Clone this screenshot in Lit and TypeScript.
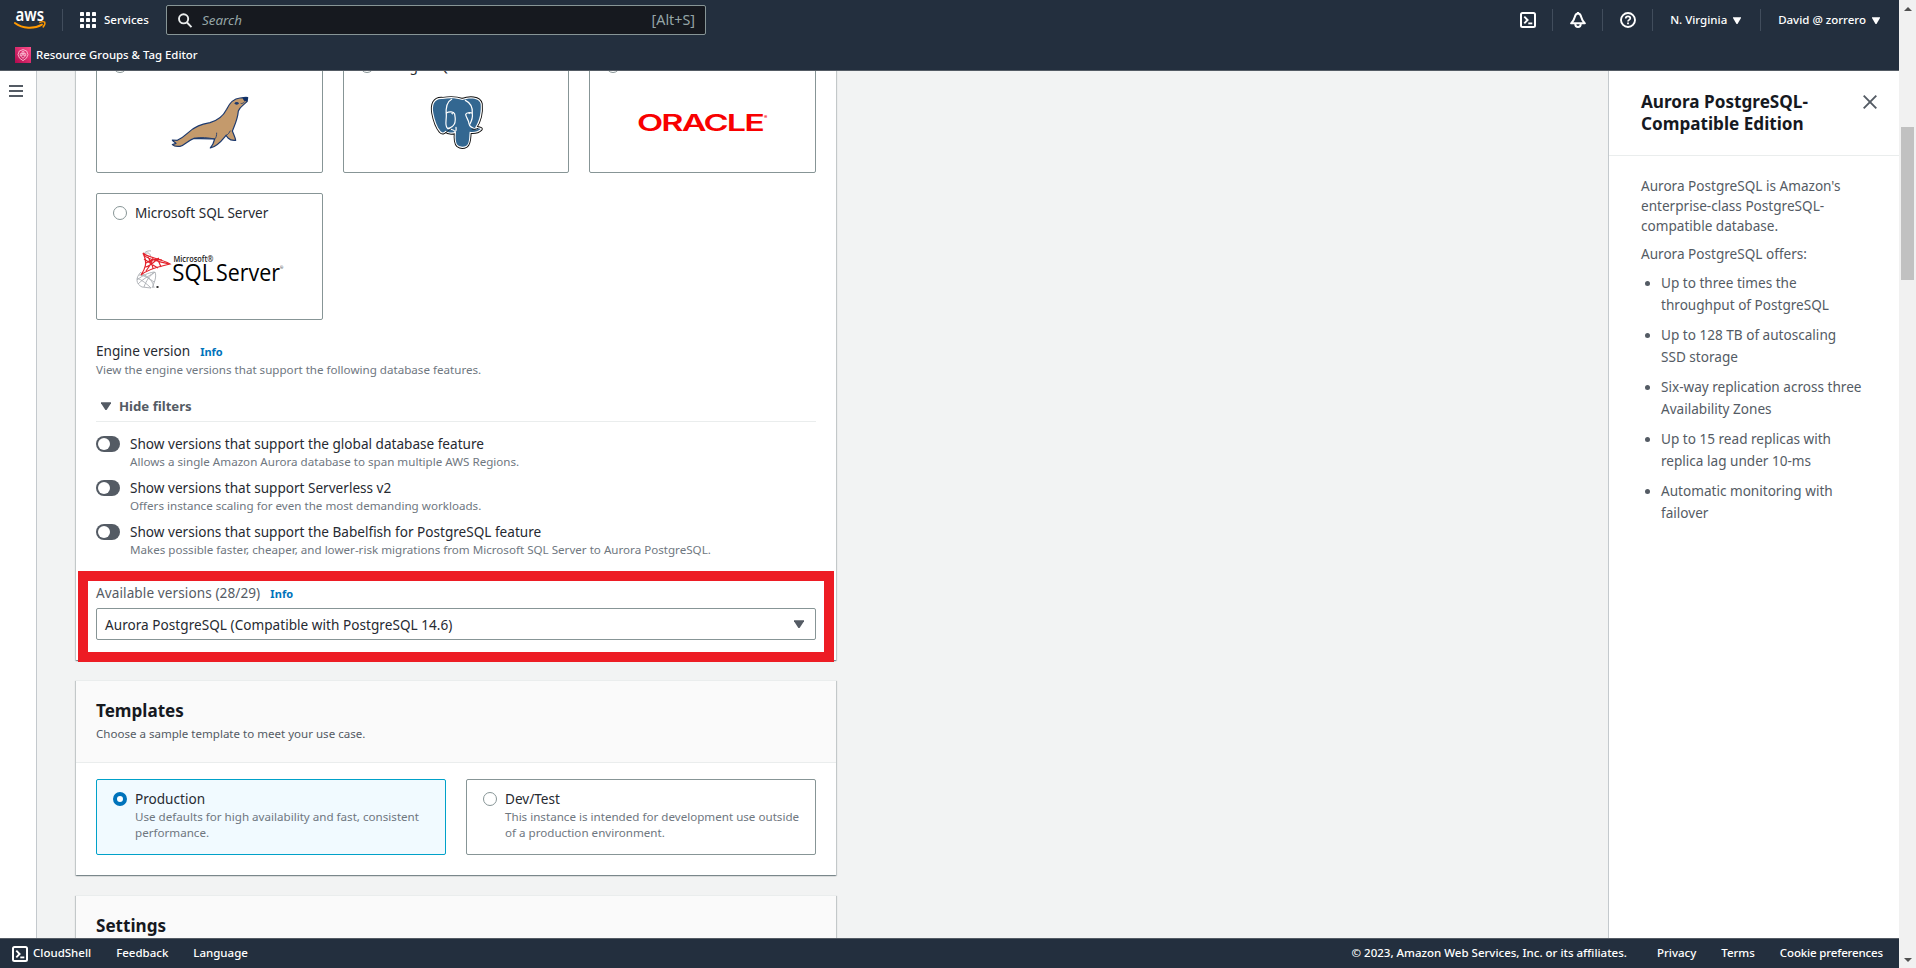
import { LitElement, html, css, svg, nothing } from "lit";
import { customElement, property } from "lit/decorators.js";
import { classMap } from "lit/directives/class-map.js";

const caret = (w: number, h: number) =>
  html`<svg width=${w} height=${h} viewBox="0 0 10 8" preserveAspectRatio="none"><path d="M0 .2h10v1L5.6 8H4.4L0 1.2z" fill="currentColor"/></svg>`;

const shellIcon = html`<svg width="16" height="16" viewBox="0 0 16 16" fill="none" stroke="#fff" stroke-width="2">
  <rect x="1" y="1" width="14" height="14" rx="1.5"/><path d="M4.3 4.6 7.6 8l-3.3 3.4" stroke-width="1.9"/><path d="M8.3 11.4h4" stroke-width="1.8"/></svg>`;

const bellIcon = html`<svg width="16" height="16" viewBox="0 0 16 16" fill="none" stroke="#fff" stroke-width="2" stroke-linejoin="round">
  <path d="M8 1.500C6 1.500 5.200 3.200 4.700 5.200 4.200 7.500 3.200 9 1.100 11.300h13.800C12.800 9 11.800 7.500 11.300 5.200 10.800 3.200 10 1.500 8 1.500z"/>
  <path d="M8 0v2"/><path d="M5.300 12c0 1.900 1 3 2.700 3s2.700-1.100 2.700-3"/></svg>`;

const helpIcon = html`<svg width="16" height="16" viewBox="0 0 16 16" fill="none" stroke="#fff" stroke-width="1.9">
  <circle cx="8" cy="8" r="7"/><path d="M5.700 6.500C5.700 5.100 6.700 4.300 8 4.300s2.300.8 2.300 2c0 1.500-2.300 1.700-2.300 3.200" stroke-width="1.7"/><path d="M8 10.500v1.700" stroke-width="1.8"/></svg>`;

const awsLogo = html`<svg width="32" height="22" viewBox="0 0 32 22">
  <text x="1.500" y="11.500" class="awstext" textLength="28.500" lengthAdjust="spacingAndGlyphs">aws</text>
  <path d="M.9 14C8.500 19.800 20 20.200 28 15.600" fill="none" stroke="#f90" stroke-width="1.900" stroke-linecap="round"/>
  <path d="M25.300 13.500c2-.9 4.600-.9 5.400-.4.500 1.200-.4 3.900-1.900 5.400" fill="none" stroke="#f90" stroke-width="1.400"/></svg>`;

const gridIcon = html`<svg width="16" height="16" viewBox="0 0 16 16" fill="#fff">
  ${[0, 6, 12].map((y) => [0, 6, 12].map((x) => svg`<rect x=${x} y=${y} width="4" height="4" rx=".4"/>`))}</svg>`;

const groupsIcon = html`<svg width="16" height="16" viewBox="0 0 16 16">
  <defs><linearGradient id="pink" x1="0" y1="1" x2="1" y2="0"><stop offset="0" stop-color="#b0084d"/><stop offset="1" stop-color="#ff4f8b"/></linearGradient></defs>
  <rect width="16" height="16" fill="url(#pink)"/>
  <g fill="none" stroke="#ffd3e2" stroke-width=".8"><path d="M8 2.600 4.300 4 3 7.700l1.600 3.500L8 13.600l3.400-2.400L13 7.700 11.700 4z"/><path d="M5.200 6.700h2v2h-2zM8.800 6.700h2v2h-2zM7 4.700h2v2H7zM6 9.200l2 2.200 2-2.200"/></g></svg>`;

const seaLion = html`<svg width="80" height="54" viewBox="300 90 240 162">
  <path d="M307 222l15 1c13-7 18-10 30-21 23-22 43-27 68-32 25-7 40-20 50-40 8-18 20-32 40-34 10 0 16-3 23-1l-2 12c-11 11-21 15-26 28-2 25-10 40-18 60 5 13 9 20 10 28-9 1-17-1-23-7l-6-8c-10 12-23 32-47 38 7-8 11-18 13-27-24-1-44-2-62-2-17 5-27 21-42 24-10 1-18 0-23-5l11-4c-4-4-10-6-11-10z" fill="#c49a6c" stroke="#1d3a6e" stroke-width="3.600" stroke-linejoin="round"/>
  <path d="M517 95l16-1-1 13-10-3z" fill="#0f2f66"/><ellipse cx="500" cy="112" rx="6" ry="4" fill="#1d3a6e"/>
  <path d="M512 112c4 2 8-1 12-5M434 219c5-4 6-11 6-19M468 208c6-2 10-8 13-14M372 217c20-5 42-2 62 2" fill="none" stroke="#1d3a6e" stroke-width="2.600"/></svg>`;

const elephantBody =
  "M128 100C101 97 95 118 99 142c4 22 11 42 22 55 5 5 10 4 14-2 8 6 20 7 32 3-2 20-1 35 6 41 8 6 18 5 25 1 10-7 8-25 10-42 12 2 25 0 33-8-6-3-12-2-17-4C238 166 243 138 241 115c-4-20-35-19-55-12-18-6-40-6-58-3z";
const elephant = html`<svg width="57" height="56" viewBox="83 88 171 168" fill="none" stroke-linejoin="round">
  <path d=${elephantBody} stroke="#111" stroke-width="12.500"/>
  <path d=${elephantBody} stroke="#fff" stroke-width="7"/>
  <path d=${elephantBody} fill="#336791"/>
  <g stroke="#fff" stroke-width="3.600" stroke-linecap="round"><path d="M154 101C138 109 136 130 138 150c0 15-5 30 3 37 8 5 18 3 23 10 3 0 4-4 3-12"/>
  <path d="M138 142c8-5 22-5 25 3 2 11 4 21-1 30-4 8-13 12-20 14M195 104c17 8 22 25 21 39M216 143c-7-4-19-2-20 4 2 10 9 16 10 27 1 8 10 14 23 16"/><path d="M216 145c2 12-3 22-7 30"/></g>
  <path d="M152 142l7 1-3 4zM203 142l7-1-3 5z" fill="#fff"/>
  <path d="M136 201c7-5 12-10 16-11M234 187c-6 5-14 4-20 3" stroke="#111" stroke-width="2.500"/></svg>`;

const oracle = html`<svg width="130" height="20" viewBox="0 0 130 20">
  <text x="-1" y="18.200" class="oracle" textLength="126" lengthAdjust="spacingAndGlyphs">ORACLE</text>
  <text x="126" y="6" class="oracle tiny">®</text></svg>`;

const sqlServer = html`<svg width="148" height="42" viewBox="0 0 148 42">
  <g fill="none" stroke="#a9adb2" stroke-width=".9"><path d="M7 6c2-4 6-4.500 8-4M8 5c4-2 6-1 6.500 2M5 23C-1 29 0 35 6 38l9 1M5 24c8 4 12 8 13 15M1 31c6-5 11-7 17-8M2 35c6-6 13-9 17-12M8 38c2-6 6-12 11-15M19 23c2 5-1 11-3 16M1 29c5 2 10 6 14 10M3 26c5 0 11 4 15 7"/></g>
  <g fill="none" stroke="#e3222b" stroke-width="1.200"><path d="M7 4c5 5 17 5 27 11-7 2-21 4-29 11 4-6 7-12 2-22z"/><path d="M8 6c4 5 14 6 25 9M10 14c7-5 12-4 16-3M9 18c5 0 12-8 14-9M8 10c5 3 10 7 14 9M12 8c3 5 5 9 5 12M17 9c-1 5-4 9-7 13M21 10c2 3 3 5 4 8"/></g>
  <path d="M20.500 38h2" stroke="#333" stroke-width="2"/>
  <text x="37.500" y="12.800" class="ms" textLength="40" lengthAdjust="spacingAndGlyphs">Microsoft®</text>
  <text x="36.300" y="32.400" class="sql" textLength="41" lengthAdjust="spacingAndGlyphs">SQL</text>
  <text x="80" y="32.400" class="sql" textLength="64" lengthAdjust="spacingAndGlyphs">Server</text>
  <text x="144" y="20" class="dot">®</text></svg>`;

const shared = css`
  * { box-sizing: border-box; }
  svg { display: block; flex: none; overflow: visible; }
`;

@customElement("console-header")
class ConsoleHeader extends LitElement {
  static styles = [shared, css`
    :host { display: flex; flex-direction: column; background: #232f3e; border-bottom: 1px solid #545b64; color: #fff; font-size: 11.5px; font-weight: 500; line-height: 20px; }
    .bar { display: flex; align-items: center; height: 40px; padding: 0 19px 0 14px; }
    .awstext { font: 600 17px "Noto Sans", sans-serif; fill: #fff; }
    .sep { width: 1px; height: 22px; background: #414d5c; flex: none; }
    .logo { width: 48px; }
    .services { display: flex; align-items: center; gap: 8px; padding-left: 17px; width: 103px; }
    .search { display: flex; align-items: center; width: 540px; height: 30px; border: 1px solid #879596; border-radius: 2px; background: #16191f; color: #95a5a6; font-size: 14.3px; font-weight: 400; padding: 0 10px 0 11px; }
    .placeholder { flex: 1; padding-left: 10px; font-style: italic; font-size: 13.4px; }
    .right { margin-left: auto; display: flex; align-items: center; }
    .icon { padding: 0 16px 0 17px; }
    .icon.first { padding-left: 0; }
    .menu { display: flex; align-items: center; gap: 6px; padding-left: 17px; white-space: nowrap; }
    .region { width: 107px; }
    .fav { display: flex; align-items: center; gap: 5px; height: 30px; padding-left: 15px; font-size: 11.4px; }
  `];
  render() {
    return html`
      <div class="bar">
        <div class="logo">${awsLogo}</div><div class="sep"></div>
        <div class="services">${gridIcon}<span>Services</span></div>
        <div class="search">
          <svg width="14" height="15" viewBox="0 0 14 15" fill="none" stroke="#eaeded" stroke-width="1.900"><circle cx="5.600" cy="5.800" r="4.600"/><path d="M9 9.500l4.500 4.700"/></svg>
          <span class="placeholder">Search</span><span>[Alt+S]</span>
        </div>
        <div class="right">
          <div class="icon first">${shellIcon}</div><div class="sep"></div>
          <div class="icon">${bellIcon}</div><div class="sep"></div>
          <div class="icon">${helpIcon}</div><div class="sep"></div>
          <div class="menu region"><span>N. Virginia</span>${caret(8, 7)}</div><div class="sep"></div>
          <div class="menu"><span>David @ zorrero</span>${caret(8, 7)}</div>
        </div>
      </div>
      <div class="fav">${groupsIcon}<span>Resource Groups &amp; Tag Editor</span></div>`;
  }
}

@customElement("console-footer")
class ConsoleFooter extends LitElement {
  static styles = [shared, css`
    :host { display: flex; align-items: center; background: #232f3e; border-top: 1px solid #545b64; color: #fff; font-size: 11.5px; font-weight: 500; padding: 0 16px 1px 12px; line-height: 16px; white-space: nowrap; }
    .shell { display: flex; align-items: center; gap: 5px; }
    .shell svg { margin-top: 1px; }
    .left, .right { display: flex; align-items: center; gap: 25px; }
    .right { margin-left: auto; }
    .copy { margin-right: 5px; }
    .cookie { letter-spacing: -.15px; }
  `];
  render() {
    return html`
      <div class="left"><span class="shell">${shellIcon}CloudShell</span><span>Feedback</span><span>Language</span></div>
      <div class="right"><span class="copy">© 2023, Amazon Web Services, Inc. or its affiliates.</span><span>Privacy</span><span>Terms</span><span class="cookie">Cookie preferences</span></div>`;
  }
}

@customElement("option-tile")
class OptionTile extends LitElement {
  @property() label = "";
  @property() description = "";
  @property({ attribute: false }) logo: unknown = null;
  @property({ type: Boolean, reflect: true }) selected = false;
  static styles = [shared, css`
    :host { display: block; border: 1px solid #879596; border-radius: 2px; background: #fff; padding: 9px 10px 0 16px; box-sizing: border-box; }
    :host([selected]) { border-color: #00a1c9; background: #f1faff; }
    .row { display: flex; align-items: center; gap: 8px; height: 20px; line-height: 20px; }
    .radio { width: 14px; height: 14px; border: 1px solid #879596; border-radius: 50%; background: #fff; }
    .radio.on { border: 4px solid #0073bb; }
    .desc { margin-left: 22px; font-size: 11.62px; line-height: 16px; color: #6f777f; }
    .logo { display: flex; align-items: center; justify-content: center; height: 60px; margin: 17px 5px 0 0; }
    .oracle { font: 600 22.500px Inter, sans-serif; fill: #f80000; letter-spacing: -1.200px; }
    .oracle.tiny { font-size: 5px; letter-spacing: 0; }
    .ms { font: 600 8.500px "Open Sans", sans-serif; fill: #222; }
    .sql { font: 500 23.500px "Open Sans", sans-serif; fill: #000; }
    .dot { font: 400 4px "Open Sans", sans-serif; fill: #222; }
  `];
  render() {
    return html`<div class="row"><span class=${classMap({ radio: true, on: this.selected })}></span><span>${this.label}</span></div>
      ${this.description ? html`<div class="desc">${this.description}</div>` : nothing}
      ${this.logo ? html`<div class="logo">${this.logo}</div>` : nothing}`;
  }
}

const filters = [
  ["Show versions that support the global database feature", "Allows a single Amazon Aurora database to span multiple AWS Regions."],
  ["Show versions that support Serverless v2", "Offers instance scaling for even the most demanding workloads."],
  ["Show versions that support the Babelfish for PostgreSQL feature", "Makes possible faster, cheaper, and lower-risk migrations from Microsoft SQL Server to Aurora PostgreSQL."],
];

@customElement("database-form")
class DatabaseForm extends LitElement {
  static styles = [shared, css`
    :host { display: flex; flex-direction: column; gap: 20px; padding: 0 39px; overflow: hidden; background: #f2f3f3; }
    .card { position: relative; flex: none; width: 760px; background: #fff; border-top: 1px solid #eaeded; box-shadow: 0 1px 1px 0 rgba(0,28,36,.3), 1px 1px 1px 0 rgba(0,28,36,.15), -1px 1px 1px 0 rgba(0,28,36,.15); }
    .engine { margin-top: -46px; padding: 20px; }
    .tiles { display: grid; grid-template-columns: repeat(3, 1fr); grid-auto-rows: 127px; gap: 20px; }
    .tiles.two { grid-template-columns: repeat(2, 1fr); grid-auto-rows: 76px; padding: 16px 20px 20px; }
    .label { display: flex; align-items: baseline; gap: 10px; height: 20px; line-height: 20px; margin-top: 21px; }
    .info { color: #0073bb; font-weight: 700; font-size: 11px; }
    .hint { font-size: 11.62px; line-height: 16px; color: #6f777f; }
    .first-hint { margin-top: 1px; }
    .hide { display: flex; align-items: center; gap: 8px; margin-top: 18px; padding: 0 0 5px 5px; line-height: 20px; border-bottom: 1px solid #eaeded; font-weight: 700; font-size: 13.2px; color: #545b64; }
    .filters { display: flex; flex-direction: column; gap: 8px; margin-top: 12px; }
    .filter { display: flex; gap: 10px; line-height: 20px; }
    .toggle { width: 24px; height: 16px; margin-top: 2px; border-radius: 8px; background: #545b64; padding: 2px; flex: none; }
    .knob { width: 12px; height: 12px; border-radius: 50%; background: #fff; }
    .available { margin-top: 25px; color: #545b64; letter-spacing: .09px; }
    .select { display: flex; align-items: center; justify-content: space-between; height: 32px; margin-top: 5px; border: 1px solid #879596; border-radius: 2px; padding: 0 11px 0 8px; letter-spacing: .03px; }
    .select svg { color: #545b64; }
    .mark { position: absolute; left: 2px; right: 2px; bottom: -2px; height: 91px; border: 10px solid #ed1c24; }
    .head { background: #fafafa; border-bottom: 1px solid #eaeded; padding: 19px 20px; height: 82px; }
    .title { font-size: 17.1px; font-weight: 700; line-height: 22px; color: #16191f; }
    .head .hint { margin-top: 4px; font-size: 11.55px; color: #545b64; }
  `];
  render() {
    return html`
      <section class="card engine">
        <div class="tiles">
          <option-tile label="MariaDB" .logo=${seaLion}></option-tile>
          <option-tile label="PostgreSQL" .logo=${elephant}></option-tile>
          <option-tile label="Oracle" .logo=${oracle}></option-tile>
          <option-tile label="Microsoft SQL Server" .logo=${sqlServer}></option-tile>
        </div>
        <div class="label"><span>Engine version</span><span class="info">Info</span></div>
        <div class="hint first-hint">View the engine versions that support the following database features.</div>
        <div class="hide">${caret(10, 8)}<span>Hide filters</span></div>
        <div class="filters">${filters.map(([name, hint]) => html`
          <div class="filter"><div class="toggle"><div class="knob"></div></div><div><div>${name}</div><div class="hint">${hint}</div></div></div>`)}
        </div>
        <div class="label available"><span>Available versions (28/29)</span><span class="info">Info</span></div>
        <div class="select"><span>Aurora PostgreSQL (Compatible with PostgreSQL 14.6)</span>${caret(10, 8)}</div>
        <div class="mark"></div>
      </section>
      <section class="card">
        <div class="head"><div class="title">Templates</div><div class="hint">Choose a sample template to meet your use case.</div></div>
        <div class="tiles two">
          <option-tile selected label="Production" description="Use defaults for high availability and fast, consistent performance."></option-tile>
          <option-tile label="Dev/Test" description="This instance is intended for development use outside of a production environment."></option-tile>
        </div>
      </section>
      <section class="card"><div class="head"><div class="title">Settings</div></div></section>`;
  }
}

@customElement("help-panel")
class HelpPanel extends LitElement {
  static styles = [shared, css`
    :host { display: block; background: #fff; border-left: 1px solid #c4c9cd; color: #545b64; }
    .head { display: flex; justify-content: space-between; height: 85px; padding: 20px 22px 0 32px; border-bottom: 1px solid #eaeded; }
    .title { font-size: 17.15px; font-weight: 700; line-height: 22px; color: #16191f; }
    .head svg { margin-top: 4px; }
    .body { padding: 20px 32px; }
    p { margin: 0 0 8px; line-height: 20px; white-space: nowrap; }
    ul { margin: 0; padding: 0; list-style: none; display: flex; flex-direction: column; gap: 8px; }
    li { display: flex; gap: 11px; line-height: 22px; padding-left: 4px; white-space: nowrap; }
    li::before { content: ""; flex: none; width: 5px; height: 5px; border-radius: 50%; background: #545b64; margin-top: 9px; }
  `];
  render() {
    const items = [
      ["Up to three times the", "throughput of PostgreSQL"],
      ["Up to 128 TB of autoscaling", "SSD storage"],
      ["Six-way replication across three", "Availability Zones"],
      ["Up to 15 read replicas with", "replica lag under 10-ms"],
      ["Automatic monitoring with", "failover"],
    ];
    return html`
      <div class="head"><div class="title">Aurora PostgreSQL-<br>Compatible Edition</div>
        <svg width="14" height="14" viewBox="0 0 14 14" stroke="#545b64" stroke-width="1.900"><path d="M.7.700l12.600 12.600M13.300.700.700 13.300"/></svg></div>
      <div class="body">
        <p>Aurora PostgreSQL is Amazon's<br>enterprise-class PostgreSQL-<br>compatible database.</p>
        <p>Aurora PostgreSQL offers:</p>
        <ul>${items.map(([a, b]) => html`<li><span>${a}<br>${b}</span></li>`)}</ul>
      </div>`;
  }
}

@customElement("app-root")
class AppRoot extends LitElement {
  static styles = [shared, css`
    :host { display: grid; grid-template-columns: 1fr 17px; height: 968px; overflow: hidden; font-family: "Noto Sans", "Open Sans", sans-serif; font-size: 13.58px; color: #262a31; }
    .console { display: grid; grid-template-rows: 71px 1fr 30px; min-width: 0; height: 968px; }
    .body { display: grid; grid-template-columns: 37px 1fr 291px; min-height: 0; overflow: hidden; }
    .nav { background: #fff; border-right: 1px solid #c4c9cd; padding: 14px 0 0 9px; }
    .scroll { display: flex; flex-direction: column; align-items: center; background: #f1f1f1; padding: 7px 0 6px; }
    .thumb { width: 13px; height: 153px; margin-top: 116px; background: #c1c1c1; }
    .down { margin-top: auto; }
  `];
  render() {
    return html`
      <div class="console">
        <console-header></console-header>
        <div class="body">
          <nav class="nav"><svg width="14" height="12" viewBox="0 0 14 12" fill="#545b64"><path d="M0 0h14v2H0zM0 5h14v2H0zM0 10h14v2H0z"/></svg></nav>
          <database-form></database-form>
          <help-panel></help-panel>
        </div>
        <console-footer></console-footer>
      </div>
      <div class="scroll">
        <svg width="8" height="4" viewBox="0 0 8 4"><path d="M0 4 4 0l4 4z" fill="#505050"/></svg>
        <div class="thumb"></div>
        <svg class="down" width="8" height="4" viewBox="0 0 8 4"><path d="M0 0h8L4 4z" fill="#505050"/></svg>
      </div>`;
  }
}
